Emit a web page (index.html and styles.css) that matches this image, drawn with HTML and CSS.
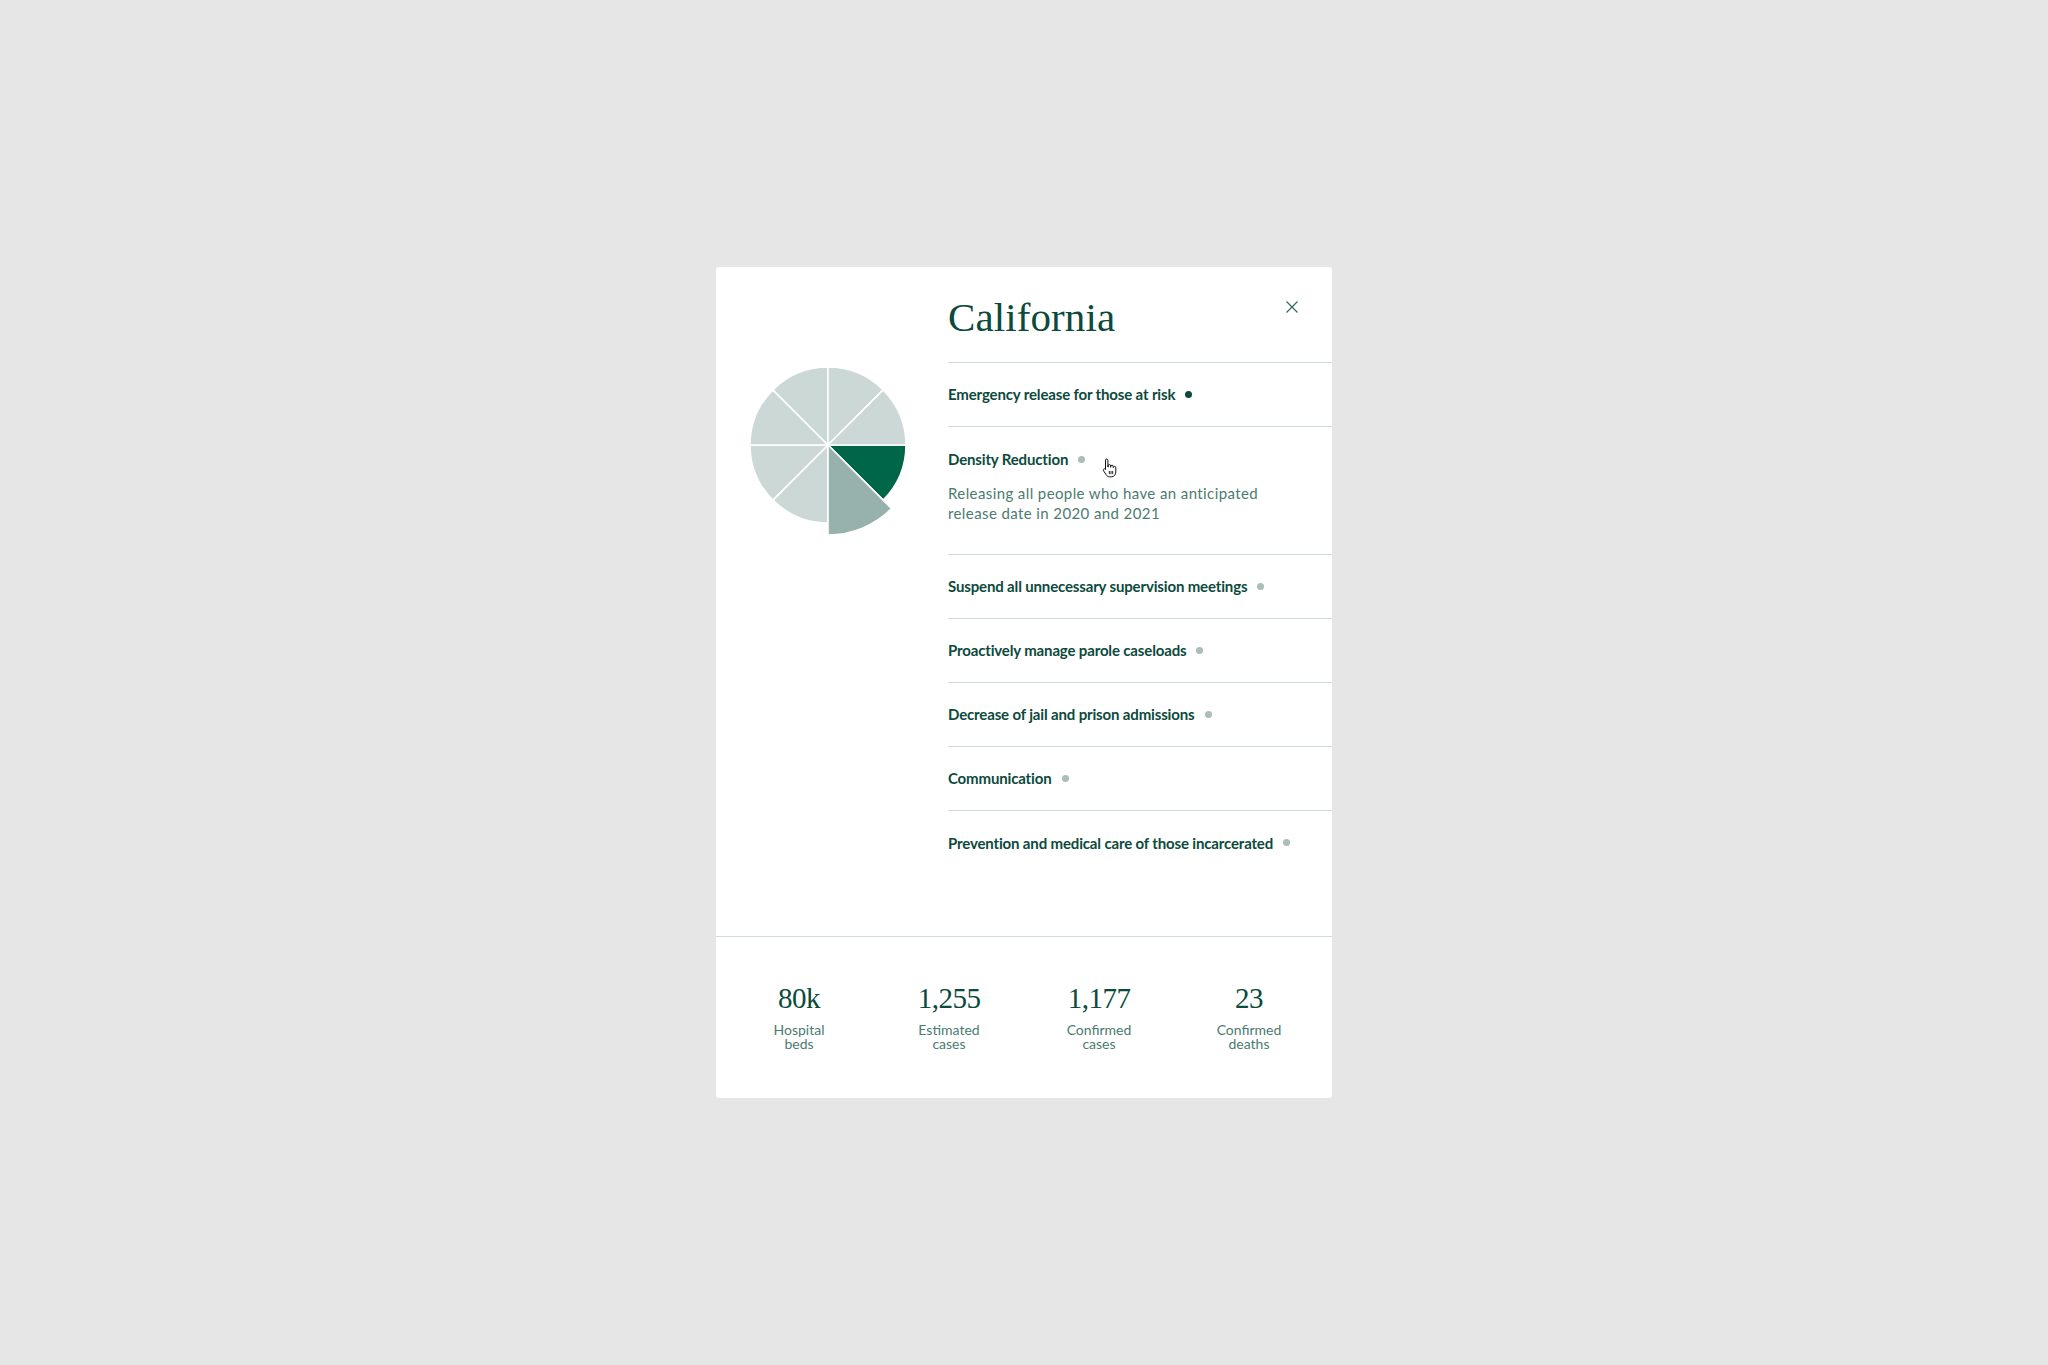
FILE: index.html
```html
<!DOCTYPE html>
<html lang="en">
<head>
<meta charset="utf-8">
<title>California</title>
<link rel="stylesheet" href="styles.css">
</head>
<body>
<div class="card">
  <div class="top">
    <div class="chart">
      <svg class="pie" width="200" height="200" viewBox="0 0 200 200">
        <g stroke="#ffffff" stroke-width="1.6" stroke-linejoin="round">
          <path class="seg-dark" d="M100 100 L178 100 A78 78 0 0 1 155.154 155.154 Z"/>
          <path class="seg-light" d="M100 100 L100 178 A78 78 0 0 1 44.846 155.154 Z"/>
          <path class="seg-light" d="M100 100 L44.846 155.154 A78 78 0 0 1 22 100 Z"/>
          <path class="seg-light" d="M100 100 L22 100 A78 78 0 0 1 44.846 44.846 Z"/>
          <path class="seg-light" d="M100 100 L44.846 44.846 A78 78 0 0 1 100 22 Z"/>
          <path class="seg-light" d="M100 100 L100 22 A78 78 0 0 1 155.154 44.846 Z"/>
          <path class="seg-light" d="M100 100 L155.154 44.846 A78 78 0 0 1 178 100 Z"/>
          <path class="seg-mid" d="M100 100 L163.64 163.64 A90 90 0 0 1 100 190 Z"/>
        </g>
      </svg>
    </div>
    <div class="panel">
      <div class="header">
        <h1 class="title">California</h1>
        <button class="close" aria-label="Close">
          <svg width="12" height="12" viewBox="0 0 12 12"><path d="M0.5 0.5 L11.5 11.5 M11.5 0.5 L0.5 11.5" stroke="#2f6b5e" stroke-width="1.2" fill="none"/></svg>
        </button>
      </div>
      <ul class="list">
        <li class="item"><span class="label">Emergency release for those at risk</span><span class="dot dot-active"></span></li>
        <li class="item item-open">
          <div class="item-head"><span class="label">Density Reduction</span><span class="dot"></span></div>
          <p class="desc">Releasing all people who have an anticipated release date in 2020 and 2021</p>
          <svg class="cursor" width="18" height="20" viewBox="0 0 18 20">
            <path d="M5.5 2.2a1.2 1.2 0 0 1 2.4 0V9h.3V7.8a1.2 1.2 0 0 1 2.4 0V9.2h.2V8.4a1.2 1.2 0 0 1 2.4 0v1.2h.2a1.2 1.2 0 0 1 2.4 0V14c0 2.6-1.8 4.8-4.4 4.8H9.6c-1.6 0-2.6-.8-3.4-2L3.4 12.6a1.2 1.2 0 0 1 1.9-1.4l.2.3Z" fill="#ffffff" stroke="#111111" stroke-width="1"/>
            <path d="M9.3 13v3.2M11 13v3.2M12.7 13v3.2" stroke="#111111" stroke-width="0.9"/>
          </svg>
        </li>
        <li class="item"><span class="label">Suspend all unnecessary supervision meetings</span><span class="dot"></span></li>
        <li class="item"><span class="label">Proactively manage parole caseloads</span><span class="dot"></span></li>
        <li class="item"><span class="label">Decrease of jail and prison admissions</span><span class="dot"></span></li>
        <li class="item"><span class="label">Communication</span><span class="dot"></span></li>
        <li class="item item-last"><span class="label">Prevention and medical care of those incarcerated</span><span class="dot"></span></li>
      </ul>
    </div>
  </div>
  <div class="stats">
    <div class="stat"><div class="stat-num">80k</div><div class="stat-label">Hospital<br>beds</div></div>
    <div class="stat"><div class="stat-num">1,255</div><div class="stat-label">Estimated<br>cases</div></div>
    <div class="stat"><div class="stat-num">1,177</div><div class="stat-label">Confirmed<br>cases</div></div>
    <div class="stat"><div class="stat-num">23</div><div class="stat-label">Confirmed<br>deaths</div></div>
  </div>
</div>
</body>
</html>
```

FILE: styles.css
```css
* { box-sizing: border-box; }

body {
  margin: 0;
  min-height: 100vh;
  background: #e6e6e6;
  display: flex;
  align-items: center;
  justify-content: center;
  font-family: Lato, "Liberation Sans", sans-serif;
}

.card {
  width: 616px;
  background: #ffffff;
  border-radius: 3px;
}

.top {
  display: flex;
  padding-bottom: 62px;
  border-bottom: 1px solid #cfdcda;
}

.chart {
  width: 232px;
  flex: none;
  padding-top: 78px;
  padding-left: 12px;
}

.pie { display: block; }
.seg-light { fill: #cbd8d6; }
.seg-dark { fill: #00664a; }
.seg-mid { fill: #97b1ad; }

.panel {
  flex: 1;
  min-width: 0;
}

.header {
  position: relative;
  padding-top: 26px;
  padding-bottom: 21px;
  border-bottom: 1px solid #cfdcda;
}

.title {
  margin: 0;
  font-family: "Liberation Serif", serif;
  font-weight: 400;
  font-size: 41px;
  line-height: 48px;
  letter-spacing: 0.1px;
  color: #0b4a3c;
}

.close {
  position: absolute;
  top: 34px;
  right: 34px;
  width: 12px;
  height: 12px;
  padding: 0;
  border: 0;
  background: none;
  display: block;
}
.close svg { display: block; }

.list {
  list-style: none;
  margin: 0;
  padding: 0;
}

.item {
  display: flex;
  align-items: center;
  height: 64px;
  padding-bottom: 1px;
  border-bottom: 1px solid #cfdcda;
}

.item-last { border-bottom: 0; height: 63px; padding-bottom: 0; }

.item-open {
  position: relative;
  display: block;
  height: auto;
  padding: 22px 0 31px;
}

.item-head {
  display: flex;
  align-items: center;
  height: 20px;
}

.label {
  font-weight: 700;
  font-size: 15px;
  line-height: 20px;
  letter-spacing: -0.15px;
  color: #0c4a3c;
}

.dot {
  width: 7px;
  height: 7px;
  border-radius: 50%;
  background: #a9bdb9;
  margin-left: 10px;
  flex: none;
}
.dot-active { background: #0c4a3c; }

.desc {
  margin: 14px 0 0;
  max-width: 330px;
  font-size: 15px;
  line-height: 20px;
  letter-spacing: 0.4px;
  color: #4b7b71;
}

.cursor {
  position: absolute;
  left: 152px;
  top: 31px;
}

.stats {
  display: grid;
  grid-template-columns: repeat(4, 150px);
  padding: 44px 8px 47px;
  text-align: center;
}

.stat-num {
  font-family: "Liberation Serif", serif;
  font-size: 29px;
  line-height: 34px;
  letter-spacing: -0.5px;
  color: #0b4a3c;
}

.stat-label {
  margin-top: 8px;
  font-size: 14px;
  line-height: 14px;
  color: #4b7b71;
}
```
